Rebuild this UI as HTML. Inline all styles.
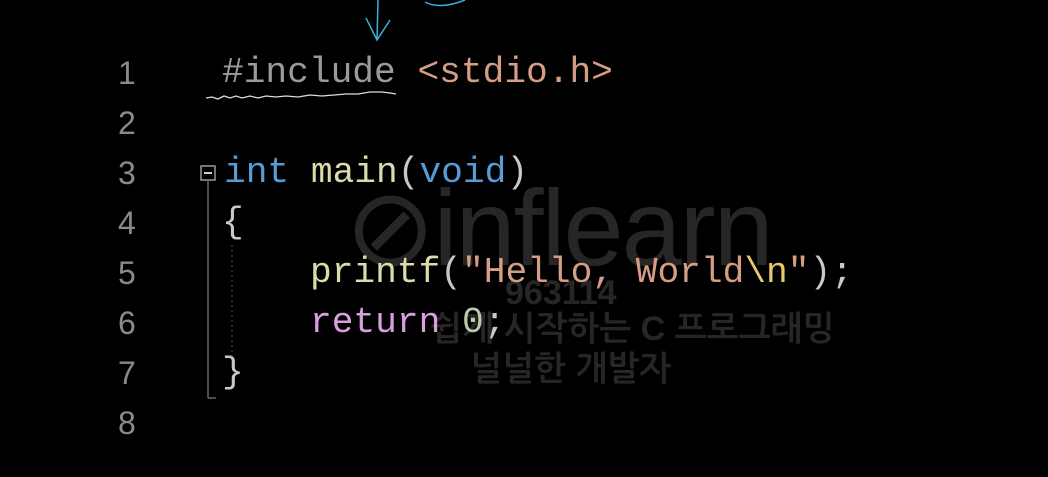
<!DOCTYPE html>
<html><head><style>
body{margin:0;width:1048px;height:477px;background:#000;overflow:hidden;position:relative;font-family:"Liberation Mono",monospace}
.l{position:absolute;font-size:36.2px;line-height:50px;white-space:pre;color:#c8c8c8}
.n{position:absolute;left:118px;font-size:32px;line-height:50px;color:#8a8a8a;font-family:"Liberation Sans",sans-serif}
.wm{position:absolute;color:#262626;font-family:"Liberation Sans","NanumGothic",sans-serif;font-weight:bold}
</style></head><body>
<div class="wm" style="left:345px;top:165px;font-size:108px;letter-spacing:-2px;font-weight:normal">⊘inflearn</div>
<div class="wm" style="left:505px;top:274px;font-size:34px">963114</div>
<div class="wm" style="left:430px;top:310px;font-size:34px">쉽게 시작하는 C 프로그래밍</div>
<div class="wm" style="left:470px;top:350px;font-size:34px">널널한 개발자</div>

<div class="n" style="top:48px">1</div>
<div class="n" style="top:98px">2</div>
<div class="n" style="top:148px">3</div>
<div class="n" style="top:198px">4</div>
<div class="n" style="top:248px">5</div>
<div class="n" style="top:298px">6</div>
<div class="n" style="top:348px">7</div>
<div class="n" style="top:398px">8</div>

<div class="l" style="left:222px;top:48px"><span style="color:#9b9b9b">#include</span> <span style="color:#d69d85">&lt;stdio.h&gt;</span></div>
<div class="l" style="left:224px;top:148px"><span style="color:#569cd6">int</span> <span style="color:#dcdcaa">main</span>(<span style="color:#569cd6">void</span>)</div>
<div class="l" style="left:222px;top:198px">{</div>
<div class="l" style="left:310px;top:248px"><span style="color:#dcdcaa">printf</span>(<span style="color:#d69d85">"Hello, World</span><span style="color:#e8c96a">\n</span><span style="color:#d69d85">"</span>);</div>
<div class="l" style="left:310px;top:298px"><span style="color:#d8a0df">return</span> <span style="color:#b5cea8">0</span>;</div>
<div class="l" style="left:222px;top:348px">}</div>

<svg width="1048" height="477" style="position:absolute;left:0;top:0">
<rect x="201" y="166" width="14" height="14" fill="none" stroke="#999" stroke-width="1.5"/>
<line x1="204" y1="173" x2="212" y2="173" stroke="#ccc" stroke-width="2"/>
<line x1="208" y1="180" x2="208" y2="398" stroke="#666" stroke-width="1.5"/>
<line x1="208" y1="398" x2="216" y2="398" stroke="#666" stroke-width="1.5"/>
<line x1="232" y1="245" x2="232" y2="360" stroke="#555" stroke-width="1" stroke-dasharray="2,3"/>
<path d="M206 98 L212 97 L218 99 L224 96 L230 98 L236 96 L242 98 L250 96 L258 98 L266 96 L276 97 L286 96 L298 97 L310 95 L322 96 L334 95 L346 94 L358 94 L370 92 L382 92 L390 93 L396 94" fill="none" stroke="#ddd" stroke-width="1.3"/>
<path d="M378 0 L377 40 M366 18 L377 40 L390 20" fill="none" stroke="#3bb0d8" stroke-width="1.5"/>
<path d="M425 2 Q440 10 465 0" fill="none" stroke="#3bb0d8" stroke-width="1.5"/>
</svg>
</body></html>
